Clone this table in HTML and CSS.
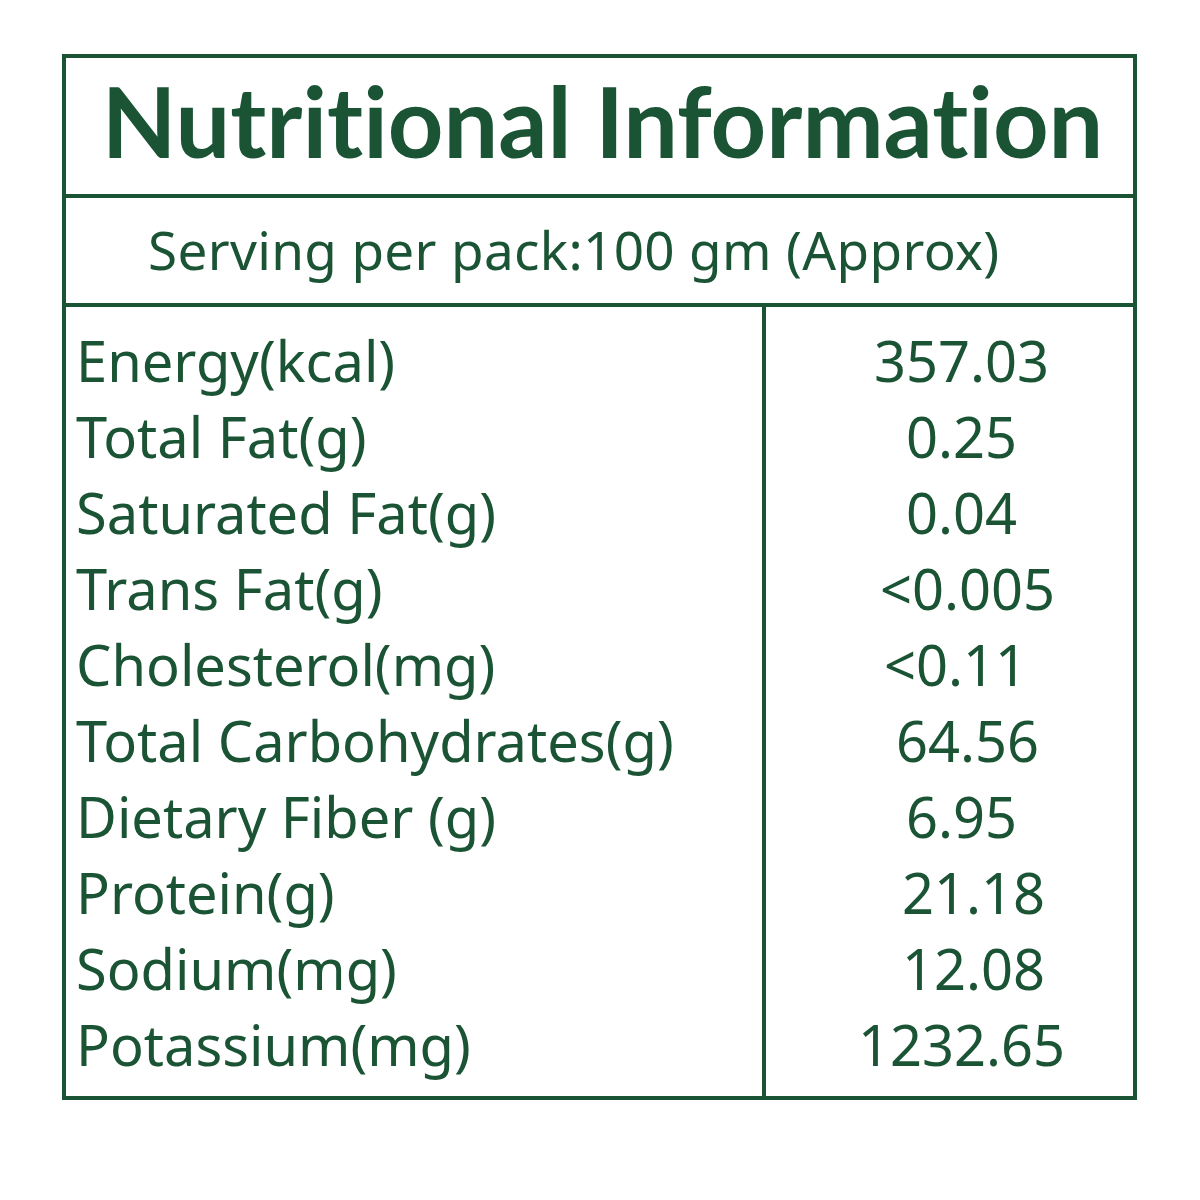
FILE: index.html
```html
<!DOCTYPE html>
<html lang="en">
<head>
<meta charset="utf-8">
<title>Nutritional Information</title>
<link rel="stylesheet" href="styles.css">
</head>
<body>
<div class="panel">
  <div class="title">Nutritional Information</div>
  <div class="serving">Serving per pack:100 gm (Approx)</div>
  <div class="facts">
    <div class="names">
      <div class="row">Energy(kcal)</div>
      <div class="row">Total Fat(g)</div>
      <div class="row">Saturated Fat(g)</div>
      <div class="row">Trans Fat(g)</div>
      <div class="row">Cholesterol(mg)</div>
      <div class="row">Total Carbohydrates(g)</div>
      <div class="row">Dietary Fiber (g)</div>
      <div class="row">Protein(g)</div>
      <div class="row">Sodium(mg)</div>
      <div class="row">Potassium(mg)</div>
    </div>
    <div class="values">
      <div class="row">357.03</div>
      <div class="row">0.25</div>
      <div class="row">0.04</div>
      <div class="row shift-r">&lt;0.005</div>
      <div class="row shift-l">&lt;0.11</div>
      <div class="row shift-r">64.56</div>
      <div class="row">6.95</div>
      <div class="row shift-r2">21.18</div>
      <div class="row shift-r2">12.08</div>
      <div class="row">1232.65</div>
    </div>
  </div>
</div>
</body>
</html>
```
FILE: styles.css
```css
html, body {
  margin: 0;
  padding: 0;
  background: #ffffff;
}
body {
  padding: 54px 0 0 62px;
  font-family: "Noto Sans", "Open Sans", sans-serif;
  color: #1b5435;
}
.panel {
  width: 1075px;
  box-sizing: border-box;
  border: 4px solid #1b5435;
}
.title {
  height: 140px;
  box-sizing: border-box;
  border-bottom: 4px solid #1b5435;
  font-family: "Lato", "Noto Sans", sans-serif;
  font-weight: 700;
  font-size: 97px;
  line-height: 126px;
  text-align: center;
  padding-left: 6px;
  white-space: nowrap;
  font-variant-ligatures: none;
  font-feature-settings: "liga" 0, "clig" 0;
}
.serving {
  height: 109px;
  box-sizing: border-box;
  border-bottom: 4px solid #1b5435;
  font-size: 53px;
  letter-spacing: 0.35px;
  line-height: 103px;
  padding-left: 82px;
  white-space: nowrap;
}
.facts {
  display: grid;
  grid-template-columns: 700px 1fr;
  height: 789px;
}
.names {
  border-right: 4px solid #1b5435;
  padding: 15px 0 0 10px;
}
.values {
  padding: 15px 0 0 24px;
  text-align: center;
}
.row {
  font-size: 56px;
  line-height: 76px;
  height: 76px;
  white-space: nowrap;
}
.shift-r { padding-left: 12px; }
.shift-r2 { padding-left: 24px; }
.shift-l { padding-right: 12px; }
```
